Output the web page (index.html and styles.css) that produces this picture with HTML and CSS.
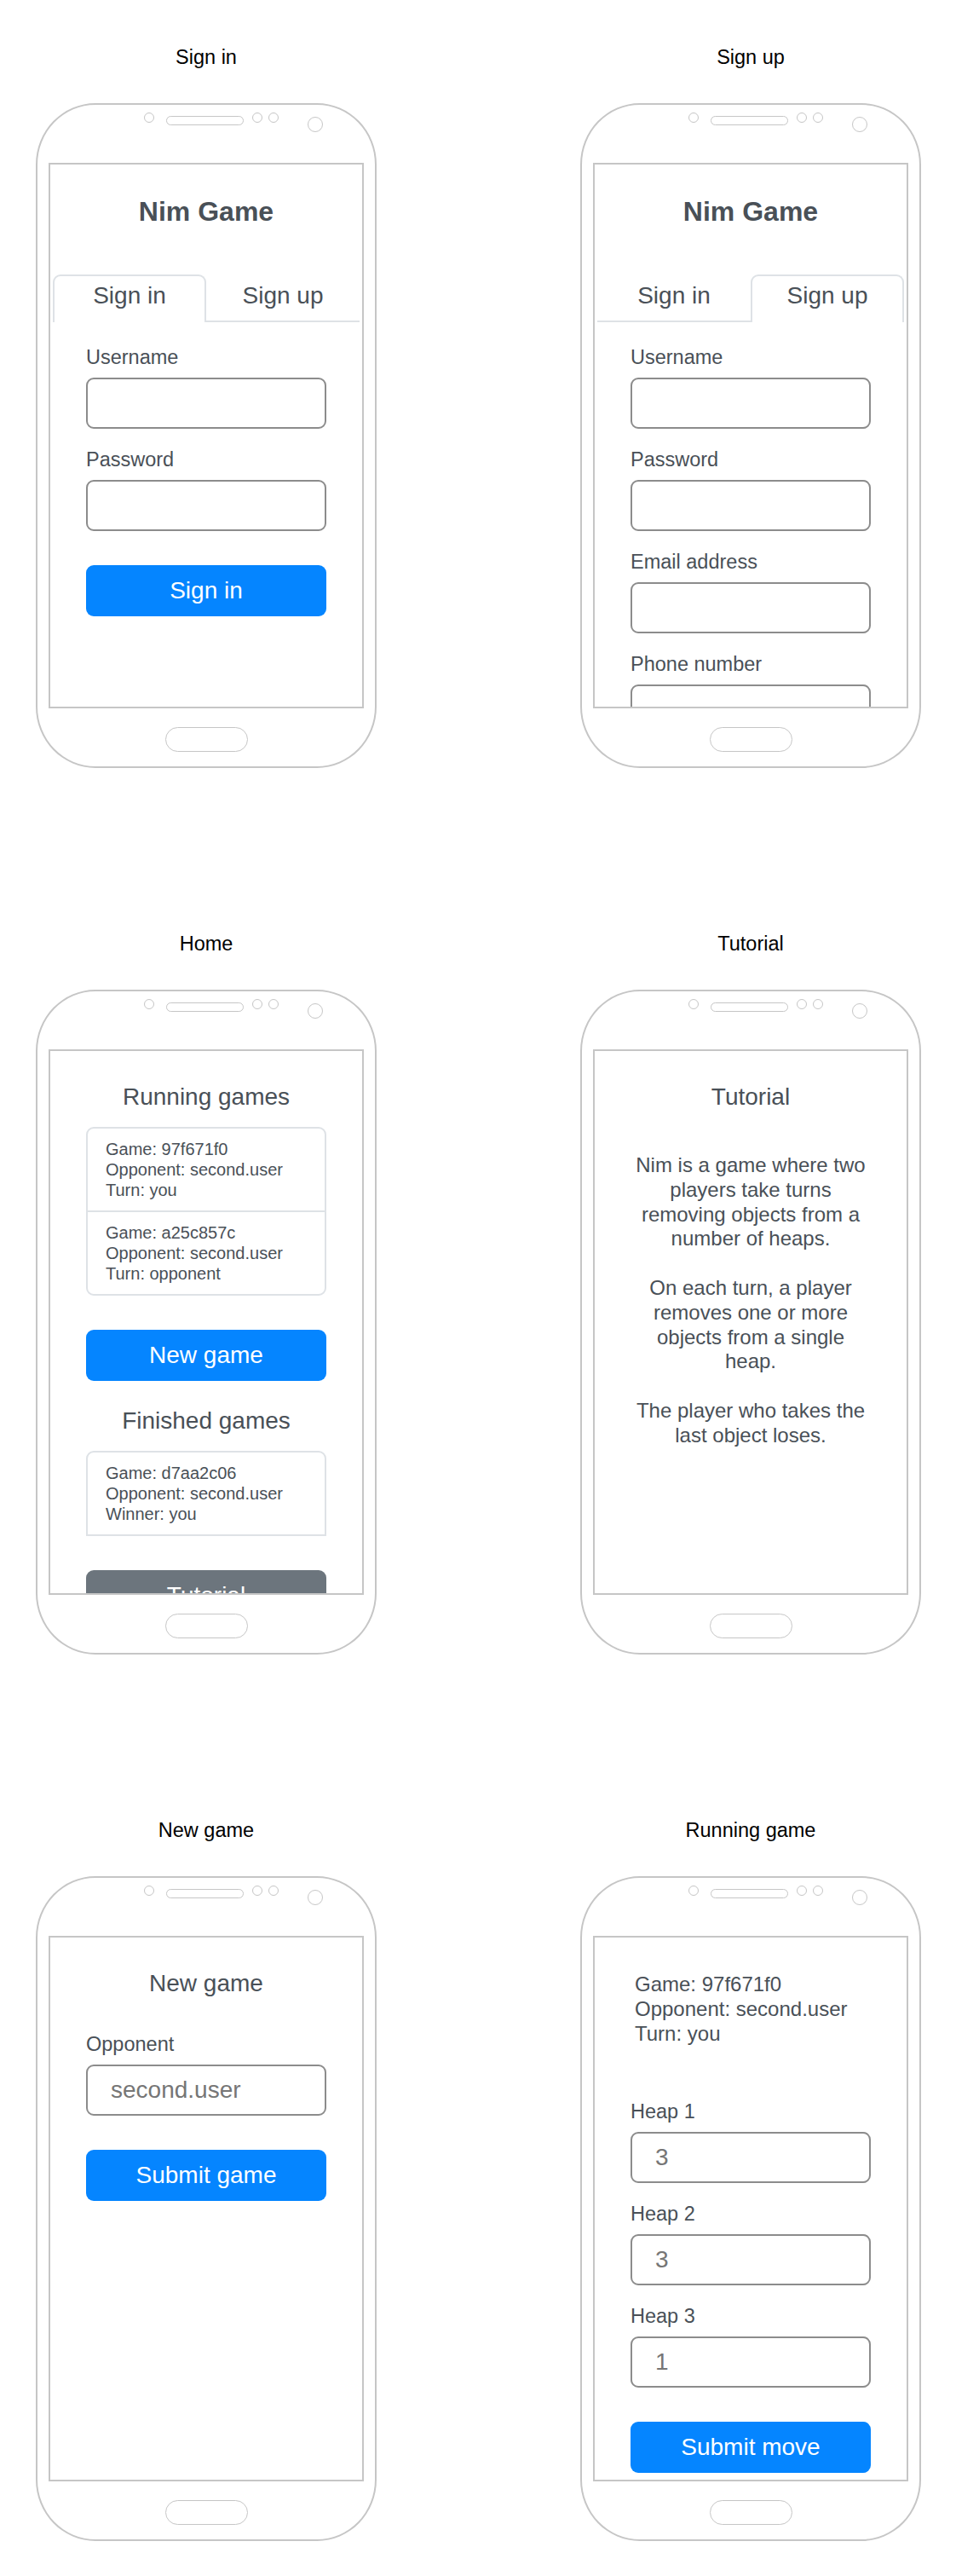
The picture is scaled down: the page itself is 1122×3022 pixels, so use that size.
FILE: index.html
```html
<!DOCTYPE html>
<html lang="en">
<head>
  <meta charset="UTF-8" />
  <meta name="viewport" content="width=device-width, initial-scale=1.0"/>
  <title>Nim Game - mockups</title>
  <link rel="stylesheet" href="styles.css">
</head>
<body>
  <main class="board">

    <!-- Sign in -->
    <section class="shot">
      <h2 class="shot-title">Sign in</h2>
      <div class="phone">
        <div class="phone-top"><span class="dot"></span><span class="speaker"></span><span class="dot dot-b"></span><span class="dot dot-c"></span><span class="camera"></span></div>
        <div class="screen">
          <h1 class="brand">Nim Game</h1>
          <nav class="tabs">
            <span class="tab active">Sign in</span>
            <span class="tab">Sign up</span>
          </nav>
          <form class="form tab-form">
            <div class="group">
              <label>Username</label>
              <div class="input"></div>
            </div>
            <div class="group">
              <label>Password</label>
              <div class="input"></div>
            </div>
            <button type="button" class="btn">Sign in</button>
          </form>
        </div>
        <div class="phone-bottom"><span class="home-btn"></span></div>
      </div>
    </section>

    <!-- Sign up -->
    <section class="shot">
      <h2 class="shot-title">Sign up</h2>
      <div class="phone">
        <div class="phone-top"><span class="dot"></span><span class="speaker"></span><span class="dot dot-b"></span><span class="dot dot-c"></span><span class="camera"></span></div>
        <div class="screen">
          <h1 class="brand">Nim Game</h1>
          <nav class="tabs">
            <span class="tab">Sign in</span>
            <span class="tab active">Sign up</span>
          </nav>
          <form class="form tab-form">
            <div class="group">
              <label>Username</label>
              <div class="input"></div>
            </div>
            <div class="group">
              <label>Password</label>
              <div class="input"></div>
            </div>
            <div class="group">
              <label>Email address</label>
              <div class="input"></div>
            </div>
            <div class="group">
              <label>Phone number</label>
              <div class="input"></div>
            </div>
          </form>
        </div>
        <div class="phone-bottom"><span class="home-btn"></span></div>
      </div>
    </section>

    <!-- Home -->
    <section class="shot">
      <h2 class="shot-title">Home</h2>
      <div class="phone">
        <div class="phone-top"><span class="dot"></span><span class="speaker"></span><span class="dot dot-b"></span><span class="dot dot-c"></span><span class="camera"></span></div>
        <div class="screen page">
          <h3 class="heading">Running games</h3>
          <ul class="card">
            <li>Game: 97f671f0<br>Opponent: second.user<br>Turn: you</li>
            <li>Game: a25c857c<br>Opponent: second.user<br>Turn: opponent</li>
          </ul>
          <button type="button" class="btn btn-space">New game</button>
          <h3 class="heading heading-space">Finished games</h3>
          <ul class="card card-open">
            <li>Game: d7aa2c06<br>Opponent: second.user<br>Winner: you</li>
          </ul>
          <button type="button" class="btn btn-gray btn-space">Tutorial</button>
        </div>
        <div class="phone-bottom"><span class="home-btn"></span></div>
      </div>
    </section>

    <!-- Tutorial -->
    <section class="shot">
      <h2 class="shot-title">Tutorial</h2>
      <div class="phone">
        <div class="phone-top"><span class="dot"></span><span class="speaker"></span><span class="dot dot-b"></span><span class="dot dot-c"></span><span class="camera"></span></div>
        <div class="screen page">
          <h3 class="heading">Tutorial</h3>
          <div class="rules">
            <p>Nim is a game where two players take turns removing objects from a number of heaps.</p>
            <p>On each turn, a player removes one or more objects from a single heap.</p>
            <p>The player who takes the last object loses.</p>
          </div>
        </div>
        <div class="phone-bottom"><span class="home-btn"></span></div>
      </div>
    </section>

    <!-- New game -->
    <section class="shot">
      <h2 class="shot-title">New game</h2>
      <div class="phone">
        <div class="phone-top"><span class="dot"></span><span class="speaker"></span><span class="dot dot-b"></span><span class="dot dot-c"></span><span class="camera"></span></div>
        <div class="screen page">
          <h3 class="heading">New game</h3>
          <form class="form new-form">
            <div class="group">
              <label>Opponent</label>
              <div class="input">second.user</div>
            </div>
            <button type="button" class="btn">Submit game</button>
          </form>
        </div>
        <div class="phone-bottom"><span class="home-btn"></span></div>
      </div>
    </section>

    <!-- Running game -->
    <section class="shot">
      <h2 class="shot-title">Running game</h2>
      <div class="phone">
        <div class="phone-top"><span class="dot"></span><span class="speaker"></span><span class="dot dot-b"></span><span class="dot dot-c"></span><span class="camera"></span></div>
        <div class="screen page">
          <div class="game-info">Game: 97f671f0<br>Opponent: second.user<br>Turn: you</div>
          <form class="form move-form">
            <div class="group">
              <label>Heap 1</label>
              <div class="input">3</div>
            </div>
            <div class="group">
              <label>Heap 2</label>
              <div class="input">3</div>
            </div>
            <div class="group">
              <label>Heap 3</label>
              <div class="input">1</div>
            </div>
            <button type="button" class="btn">Submit move</button>
          </form>
        </div>
        <div class="phone-bottom"><span class="home-btn"></span></div>
      </div>
    </section>

  </main>
</body>
</html>
```

FILE: styles.css
```css
* {
  margin: 0;
  padding: 0;
  box-sizing: border-box;
}
body {
  font-family: "Liberation Sans", Arial, Helvetica, sans-serif;
  background: #fff;
  color: #495057;
}
.board {
  display: grid;
  grid-template-columns: 400px 400px;
  column-gap: 239px;
  row-gap: 192px;
  padding: 53px 0 0 42px;
}
.shot-title {
  font-size: 23.5px;
  font-weight: normal;
  line-height: 28px;
  color: #000;
  text-align: center;
  margin-bottom: 40px;
}

/* Phone frame */
.phone {
  width: 400px;
  height: 780px;
  border: 2px solid #c6c6c6;
  border-radius: 70px / 72px;
  display: flex;
  flex-direction: column;
}
.phone-top {
  height: 68px;
  display: flex;
  align-items: flex-start;
  padding-left: 125px;
}
.dot {
  width: 12px;
  height: 12px;
  margin-top: 9px;
  border: 1.5px solid #c6c6c6;
  border-radius: 50%;
}
.speaker {
  width: 91px;
  height: 11px;
  margin: 12.5px 0 0 14px;
  border: 1.5px solid #c6c6c6;
  border-radius: 6px;
}
.dot-b { margin-left: 9.5px; margin-top: 8.5px; }
.dot-c { margin-left: 7.5px; margin-top: 8.5px; }
.camera {
  width: 18px;
  height: 18px;
  margin: 13.5px 0 0 34px;
  border: 1.5px solid #c6c6c6;
  border-radius: 50%;
}
.screen {
  height: 640px;
  margin: 0 13px;
  border: 2px solid #c6c6c6;
  overflow: hidden;
}
.phone-bottom {
  flex: 1;
  display: flex;
  justify-content: center;
  align-items: flex-start;
}
.home-btn {
  width: 97px;
  height: 29px;
  margin-top: 21.5px;
  border: 1.5px solid #c6c6c6;
  border-radius: 15px;
}

/* Sign in / sign up */
.brand {
  font-size: 32px;
  line-height: 38px;
  font-weight: bold;
  text-align: center;
  padding-top: 36px;
  margin-bottom: 55px;
}
.tabs {
  display: flex;
  margin: 0 3px;
  border-bottom: 2px solid #dee2e6;
}
.tab {
  flex: 1;
  text-align: center;
  font-size: 28px;
  line-height: 34px;
  padding: 6px 0 12px;
  border: 2px solid transparent;
  border-bottom: none;
  border-radius: 9px 9px 0 0;
}
.tab.active {
  border-color: #dee2e6;
  background: #fff;
  margin-bottom: -2px;
  padding-bottom: 14px;
}

/* Forms */
.form {
  padding: 0 42px;
}
.tab-form {
  padding-top: 27px;
}
.group {
  margin-bottom: 22px;
}
.group label {
  display: block;
  font-size: 23.5px;
  line-height: 28px;
  margin-bottom: 10px;
}
.input {
  height: 60px;
  border: 2px solid #8c8c8c;
  border-radius: 9px;
  padding-left: 27px;
  font-size: 28px;
  line-height: 56px;
  color: #767676;
}
.btn {
  display: block;
  width: 100%;
  height: 60px;
  border: none;
  border-radius: 9px;
  background: #0585ff;
  color: #fff;
  font-family: inherit;
  font-size: 28px;
}
.form .btn {
  margin-top: 40px;
}
.btn-gray {
  background: #6c757d;
}

/* Content pages */
.page {
  padding: 37px 42px 0;
}
.page .form {
  padding: 0;
}
.heading {
  font-size: 28px;
  line-height: 34px;
  font-weight: normal;
  text-align: center;
}
.heading-space {
  margin-top: 30px;
}
.card {
  list-style: none;
  margin-top: 18px;
  border: 2px solid #dee2e6;
  border-radius: 9px;
}
.card li {
  font-size: 20px;
  line-height: 24px;
  padding: 12px 21px;
}
.card li + li {
  border-top: 2px solid #dee2e6;
}
.card-open {
  border-radius: 9px 9px 0 0;
}
.btn-space {
  margin-top: 40px;
}
.rules {
  margin-top: 49px;
  text-align: center;
  font-size: 24px;
  line-height: 28.8px;
}
.rules p {
  margin-bottom: 28.8px;
}
.new-form {
  margin-top: 40px;
}
.game-info {
  font-size: 24px;
  line-height: 28.8px;
  padding: 4px 5px 0;
}
.move-form {
  margin-top: 63px;
}
```
